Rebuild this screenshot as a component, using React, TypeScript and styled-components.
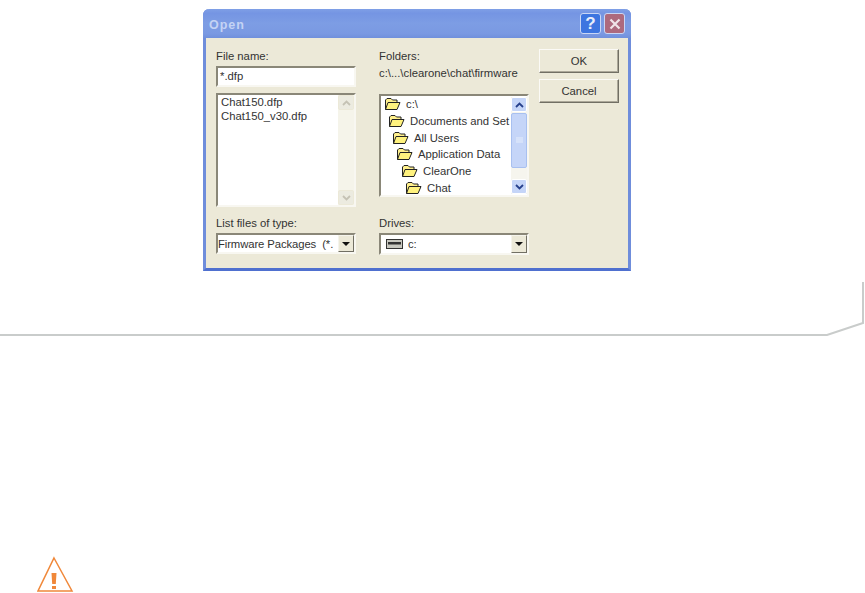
import React from "react";
import styled, { createGlobalStyle } from "styled-components";

const Global = createGlobalStyle`
  html, body { margin: 0; padding: 0; background: #fff; }
  body { font-family: "Liberation Sans", Arial, sans-serif; }
`;

const Page = styled.div`
  width: 865px;
  height: 593px;
  overflow: hidden;
  padding-top: 9px;
  box-sizing: border-box;
`;

const Dialog = styled.div`
  width: 428px;
  height: 262px;
  margin-left: 203px;
  box-sizing: border-box;
  display: flex;
  flex-direction: column;
  border: 3px solid #6f8ddb;
  border-top: 0;
  border-bottom-color: #4f70cf;
  border-radius: 6px 6px 0 0;
  background: #ece9d8;
  color: #333;
  font-size: 11.3px;
`;

const TitleBar = styled.div`
  height: 29px;
  margin: 0 -3px;
  flex: none;
  display: flex;
  align-items: center;
  justify-content: space-between;
  padding: 0 6px 0 6px;
  border-radius: 6px 6px 0 0;
  background: linear-gradient(180deg, #7f9fe6 0%, #7595e3 15%, #7d9de4 50%, #7a99e2 85%, #7090dc 100%);
`;

const TitleText = styled.span`
  color: #c4d3f4;
  font-weight: 700;
  font-size: 12.5px;
  letter-spacing: 1px;
  margin-top: 3px;
`;

const TitleButtons = styled.div`
  display: flex;
  gap: 3px;
`;

const TitleButton = styled.div<{ $close?: boolean }>`
  width: 21px;
  height: 21px;
  box-sizing: border-box;
  border: 1px solid #c9d6f5;
  border-radius: 3px;
  display: flex;
  align-items: center;
  justify-content: center;
  color: #e9eefb;
  font-weight: 700;
  font-size: 17px;
  background: ${(p) => (p.$close ? "#ad6a7e" : "#3d75e0")};
`;

const Body = styled.div`
  flex: 1;
  display: grid;
  grid-template-columns: 140px 150px 80px;
  column-gap: 23px;
  padding: 10px 0 0 10px;
  align-items: start;
`;

const Column = styled.div`
  display: flex;
  flex-direction: column;
`;

const ButtonColumn = styled(Column)`
  margin: 1px 0 0 -13px;
  gap: 6px;
  width: 80px;
`;

const Label = styled.div`
  height: 16px;
  line-height: 16px;
  margin-bottom: 2px;
  white-space: nowrap;
`;

const PathText = styled.div`
  height: 16px;
  line-height: 16px;
  margin: -1px 0 13px;
  white-space: nowrap;
`;

const sunken = `
  box-sizing: border-box;
  background: #fff;
  border: 2px solid;
  border-color: #8a8778 #f8f7f1 #f8f7f1 #8a8778;
`;

const TextInput = styled.div`
  ${sunken}
  height: 21px;
  padding: 1px 0 0 2px;
  line-height: 15px;
  margin-bottom: 6px;
`;

const ListBox = styled.div<{ $h: number; $mb: number }>`
  ${sunken}
  height: ${(p) => p.$h}px;
  margin-bottom: ${(p) => p.$mb}px;
  display: flex;
  overflow: hidden;
`;

const ListItems = styled.div`
  flex: 1;
  min-width: 0;
  padding: 0 0 0 3px;
  overflow: hidden;
`;

const FileRow = styled.div`
  height: 14px;
  line-height: 14px;
  white-space: nowrap;
`;

const FolderRow = styled.div<{ $indent: number }>`
  height: 16.7px;
  display: flex;
  align-items: center;
  gap: 5px;
  padding-left: ${(p) => p.$indent}px;
  white-space: nowrap;
  overflow: hidden;
`;

const ScrollTrack = styled.div<{ $active?: boolean }>`
  width: 16px;
  flex: none;
  display: flex;
  flex-direction: column;
  margin: ${(p) => (p.$active ? "1px 0" : "0")};
  background: ${(p) => (p.$active ? "#f6f5ee" : "#f5f4ea")};
`;

const ScrollBtn = styled.div<{ $active?: boolean }>`
  height: 15px;
  flex: none;
  box-sizing: border-box;
  border: 1px solid ${(p) => (p.$active ? "#fff" : "#ece9d8")};
  border-radius: 2px;
  display: flex;
  align-items: center;
  justify-content: center;
  background: ${(p) => (p.$active ? "#c5d5f8" : "#ecebe0")};
`;

const ScrollThumb = styled.div`
  height: 55px;
  flex: none;
  margin-top: 1px;
  box-sizing: border-box;
  border: 1px solid #a8c0f0;
  border-radius: 2px;
  background: #c5d5f8;
  display: flex;
  align-items: center;
  justify-content: center;
`;

const Spacer = styled.div`
  flex: 1;
`;

const Combo = styled.div<{ $h: number }>`
  ${sunken}
  height: ${(p) => p.$h}px;
  display: flex;
  align-items: center;
`;

const ComboText = styled.div`
  flex: 1;
  min-width: 0;
  padding-left: 0;
  letter-spacing: -0.1px;
  overflow: hidden;
  white-space: nowrap;
  display: flex;
  align-items: center;
  gap: 4px;
`;

const DriveText = styled(ComboText)`
  padding-left: 5px;
  gap: 5px;
`;

const ComboArrow = styled.div`
  width: 16px;
  align-self: stretch;
  flex: none;
  box-sizing: border-box;
  background: #ece9d8;
  border: 1px solid;
  border-color: #f5f4ec #716f64 #716f64 #f5f4ec;
  display: flex;
  align-items: center;
  justify-content: center;
`;

const DownTriangle = styled.div`
  width: 0;
  height: 0;
  border-left: 4px solid transparent;
  border-right: 4px solid transparent;
  border-top: 4px solid #111;
`;

const PushButton = styled.div`
  height: 24px;
  box-sizing: border-box;
  background: #ece9d8;
  border: 1px solid;
  border-color: #fbfaf6 #716f64 #716f64 #fbfaf6;
  box-shadow: inset -1px -1px 0 #aca899;
  display: flex;
  align-items: center;
  justify-content: center;
  color: #333;
`;

const Rule = styled.svg`
  display: block;
  margin-top: 10px;
`;

const Warning = styled.svg`
  display: block;
  margin: 210px 0 0 37px;
`;

const Chevron = ({ up, color }: { up?: boolean; color: string }) => (
  <svg width="9" height="6" viewBox="0 0 9 6">
    <path d={up ? "M1 5 L4.5 1.5 L8 5" : "M1 1 L4.5 4.5 L8 1"} fill="none" stroke={color} strokeWidth="1.8" />
  </svg>
);

const Folder = () => (
  <svg width="17" height="14" viewBox="0 0 17 14" style={{ flex: "none" }}>
    <path d="M1.5 12.5 V3 L3 1.5 H7 L8.5 3 H13 V5" fill="#fff08c" stroke="#222" />
    <path d="M1.5 12.5 L4 5.5 H16 L13 12.5 Z" fill="#fff27e" stroke="#222" />
  </svg>
);

const Drive = () => (
  <svg width="17" height="10" viewBox="0 0 17 10" style={{ flex: "none" }}>
    <rect x="0.5" y="0.5" width="16" height="9" fill="#c8c8c0" stroke="#333" />
    <rect x="2" y="3" width="13" height="2.5" fill="#333" />
  </svg>
);

const folders: [string, number][] = [
  ["c:\\", 0],
  ["Documents and Set", 4],
  ["All Users", 8],
  ["Application Data", 12],
  ["ClearOne", 17],
  ["Chat", 21],
];

export default function App() {
  return (
    <Page>
      <Global />
      <Dialog>
        <TitleBar>
          <TitleText>Open</TitleText>
          <TitleButtons>
            <TitleButton>?</TitleButton>
            <TitleButton $close>
              <svg width="12" height="12" viewBox="0 0 12 12">
                <path d="M1.5 1.5 L10.5 10.5 M10.5 1.5 L1.5 10.5" stroke="#f0e4e8" strokeWidth="2.2" />
              </svg>
            </TitleButton>
          </TitleButtons>
        </TitleBar>
        <Body>
          <Column>
            <Label>File name:</Label>
            <TextInput>*.dfp</TextInput>
            <ListBox $h={114} $mb={8}>
              <ListItems>
                <FileRow>Chat150.dfp</FileRow>
                <FileRow>Chat150_v30.dfp</FileRow>
              </ListItems>
              <ScrollTrack>
                <ScrollBtn>
                  <Chevron up color="#c5c2b4" />
                </ScrollBtn>
                <Spacer />
                <ScrollBtn>
                  <Chevron color="#c5c2b4" />
                </ScrollBtn>
              </ScrollTrack>
            </ListBox>
            <Label>List files of type:</Label>
            <Combo $h={21}>
              <ComboText>Firmware Packages&nbsp;&nbsp;(*.</ComboText>
              <ComboArrow>
                <DownTriangle />
              </ComboArrow>
            </Combo>
          </Column>
          <Column>
            <Label>Folders:</Label>
            <PathText>c:\...\clearone\chat\firmware</PathText>
            <ListBox $h={103} $mb={18}>
              <ListItems>
                {folders.map(([name, indent]) => (
                  <FolderRow key={name} $indent={indent}>
                    <Folder />
                    {name}
                  </FolderRow>
                ))}
              </ListItems>
              <ScrollTrack $active>
                <ScrollBtn $active>
                  <Chevron up color="#26408c" />
                </ScrollBtn>
                <ScrollThumb>
                  <svg width="7" height="7" viewBox="0 0 7 7">
                    <path d="M0 1 H7 M0 3 H7 M0 5 H7" stroke="#e6eefc" />
                  </svg>
                </ScrollThumb>
                <Spacer />
                <ScrollBtn $active>
                  <Chevron color="#26408c" />
                </ScrollBtn>
              </ScrollTrack>
            </ListBox>
            <Label>Drives:</Label>
            <Combo $h={22}>
              <DriveText>
                <Drive />
                c:
              </DriveText>
              <ComboArrow>
                <DownTriangle />
              </ComboArrow>
            </Combo>
          </Column>
          <ButtonColumn>
            <PushButton>OK</PushButton>
            <PushButton>Cancel</PushButton>
          </ButtonColumn>
        </Body>
      </Dialog>
      <Rule width="865" height="65" viewBox="0 0 865 65">
        <path d="M0 54 H827 L863 42 V1" fill="none" stroke="#c9cccb" strokeWidth="2" />
      </Rule>
      <Warning width="38" height="36" viewBox="0 0 38 36">
        <path d="M17 2 L35 35 H1 Z" fill="none" stroke="#f0883a" strokeWidth="1.5" />
        <path d="M14.5 17 H19.5 L18.8 28 H15.2 Z M15 30 H19 V33 H15 Z" fill="#f0883a" />
      </Warning>
    </Page>
  );
}
